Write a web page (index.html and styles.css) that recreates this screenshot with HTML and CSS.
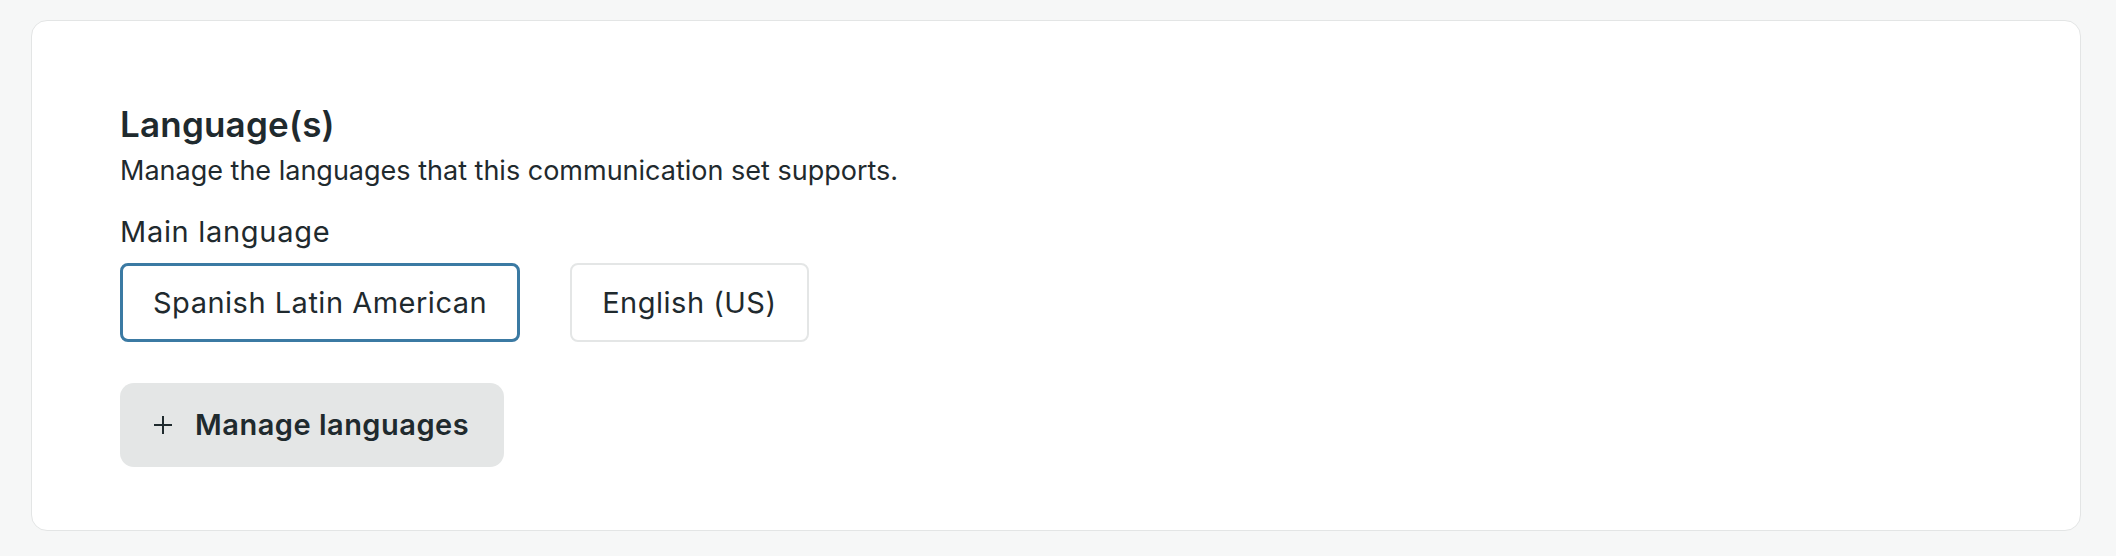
FILE: index.html
```html
<!DOCTYPE html>
<html lang="en">
<head>
<meta charset="utf-8">
<title>Language(s)</title>
<link rel="stylesheet" href="styles.css">
</head>
<body>
<main class="page">
  <section class="card">
    <h2 class="title">Language(s)</h2>
    <p class="subtitle">Manage the languages that this communication set supports.</p>
    <div class="label">Main language</div>
    <div class="options">
      <button class="option option-selected" type="button">Spanish Latin American</button>
      <button class="option" type="button">English (US)</button>
    </div>
    <button class="manage" type="button">
      <svg class="plus" width="22" height="22" viewBox="0 0 22 22" aria-hidden="true">
        <path d="M11 2v18M2 11h18" stroke="#1f2a2e" stroke-width="2" fill="none"/>
      </svg>
      <span>Manage languages</span>
    </button>
  </section>
</main>
</body>
</html>
```
FILE: styles.css
```css
html, body {
  margin: 0;
  padding: 0;
  background: #f6f7f7;
}

body {
  font-family: Inter, "Noto Sans", "Liberation Sans", sans-serif;
  color: #1f2a2e;
}

.page {
  padding: 20px 35px 25px 31px;
}

.card {
  background: #ffffff;
  border: 1px solid #e3e5e5;
  border-radius: 16px;
  padding: 82px 88px 63px 88px;
}

.title {
  margin: 0;
  font-size: 35px;
  line-height: 42px;
  font-weight: 600;
  letter-spacing: 0.2px;
}

.subtitle {
  margin: 9px 0 0;
  font-size: 27px;
  line-height: 34px;
  font-weight: 400;
}

.label {
  margin-top: 26px;
  font-size: 29px;
  line-height: 36px;
  letter-spacing: 0.7px;
}

.options {
  display: flex;
  gap: 50px;
  margin-top: 13px;
}

.option {
  font-family: inherit;
  color: inherit;
  font-size: 29px;
  line-height: 36px;
  letter-spacing: 0.5px;
  background: #ffffff;
  border: 2px solid #e4e6e6;
  border-radius: 8px;
  padding: 19.5px 30px;
  margin: 0;
  cursor: pointer;
}

.option-selected {
  border: 3px solid #3b7aa3;
  padding: 18.5px 30px;
}

.manage {
  display: flex;
  align-items: center;
  gap: 21px;
  margin-top: 41px;
  font-family: inherit;
  color: inherit;
  font-size: 29px;
  line-height: 36px;
  letter-spacing: 0.5px;
  font-weight: 600;
  background: #e4e6e6;
  border: none;
  border-radius: 14px;
  padding: 24px 35px 24px 32px;
  cursor: pointer;
}

.plus {
  display: block;
}
```
